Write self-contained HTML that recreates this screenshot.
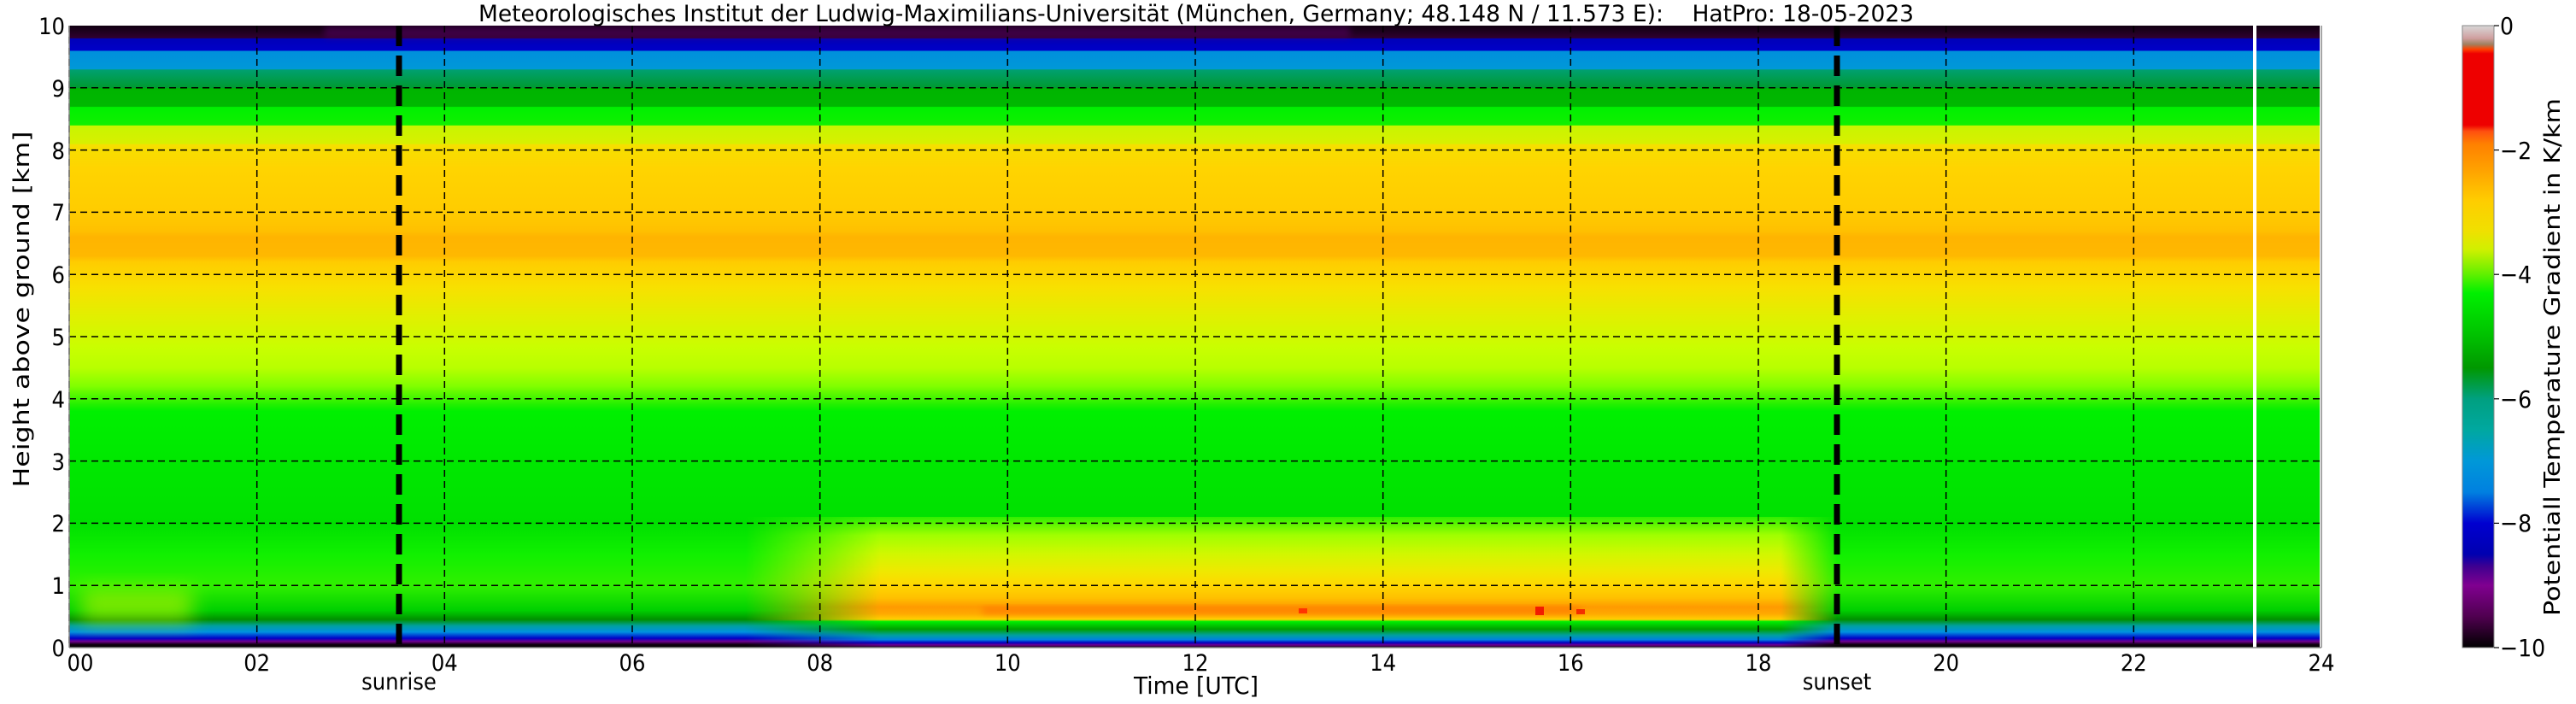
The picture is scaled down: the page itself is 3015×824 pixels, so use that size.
<!DOCTYPE html>
<html><head><meta charset="utf-8"><style>
html,body{margin:0;padding:0;background:#fff;}
svg{display:block;}
text{font-family:"DejaVu Sans Condensed","DejaVu Sans","Liberation Sans",sans-serif;font-stretch:condensed;fill:#000;}
</style></head><body>
<svg width="3015" height="824" viewBox="0 0 3015 824" xmlns="http://www.w3.org/2000/svg">
<defs>
<linearGradient id="base" gradientUnits="userSpaceOnUse" x1="0" y1="30" x2="0" y2="758">
<stop offset="0" stop-color="#100010"/><stop offset="0.02" stop-color="#300030"/>
<stop offset="0.021" stop-color="#0000b8"/><stop offset="0.04" stop-color="#0000c8"/>
<stop offset="0.041" stop-color="#0090dc"/><stop offset="0.07" stop-color="#0098d8"/>
<stop offset="0.071" stop-color="#00a070"/><stop offset="0.1" stop-color="#009a30"/>
<stop offset="0.101" stop-color="#00b400"/><stop offset="0.13" stop-color="#00b800"/>
<stop offset="0.131" stop-color="#00f000"/><stop offset="0.16" stop-color="#10f000"/>
<stop offset="0.161" stop-color="#c8f500"/><stop offset="0.19" stop-color="#d8f000"/>
<stop offset="0.191" stop-color="#f5e000"/><stop offset="0.23" stop-color="#ffd400"/>
<stop offset="0.30" stop-color="#ffcc00"/><stop offset="0.33" stop-color="#ffc000"/>
<stop offset="0.34" stop-color="#ffb400"/><stop offset="0.37" stop-color="#ffb800"/>
<stop offset="0.38" stop-color="#ffcc00"/><stop offset="0.42" stop-color="#f8e000"/>
<stop offset="0.47" stop-color="#e0f000"/><stop offset="0.52" stop-color="#c8ff00"/>
<stop offset="0.55" stop-color="#b8ff00"/><stop offset="0.58" stop-color="#80ff00"/>
<stop offset="0.61" stop-color="#20f000"/><stop offset="0.62" stop-color="#00f000"/>
<stop offset="0.70" stop-color="#00e800"/><stop offset="0.80" stop-color="#00e000"/>
<stop offset="0.85" stop-color="#10f000"/><stop offset="0.9" stop-color="#30f000"/>
<stop offset="0.94" stop-color="#00d000"/><stop offset="0.955" stop-color="#009000"/>
<stop offset="0.965" stop-color="#00a0a0"/><stop offset="0.975" stop-color="#0090e0"/>
<stop offset="0.985" stop-color="#0000c8"/><stop offset="0.99" stop-color="#700090"/>
<stop offset="0.995" stop-color="#100010"/><stop offset="1" stop-color="#000"/>
</linearGradient>
<linearGradient id="day" gradientUnits="userSpaceOnUse" x1="0" y1="605" x2="0" y2="758">
<stop offset="0" stop-color="#30f000"/><stop offset="0.14" stop-color="#a0ff00"/>
<stop offset="0.28" stop-color="#d0f800"/><stop offset="0.42" stop-color="#f0e800"/>
<stop offset="0.52" stop-color="#ffd800"/><stop offset="0.62" stop-color="#ffc000"/>
<stop offset="0.69" stop-color="#ff9a00"/><stop offset="0.74" stop-color="#ffa800"/>
<stop offset="0.785" stop-color="#ffd000"/><stop offset="0.80" stop-color="#00f000"/>
<stop offset="0.86" stop-color="#00a000"/><stop offset="0.905" stop-color="#00a0a0"/>
<stop offset="0.94" stop-color="#0080e0"/><stop offset="0.962" stop-color="#0000c0"/>
<stop offset="0.98" stop-color="#700090"/><stop offset="1" stop-color="#000"/>
</linearGradient>
<linearGradient id="fade" gradientUnits="userSpaceOnUse" x1="81" y1="0" x2="2717" y2="0">
<stop offset="0.30" stop-color="#fff" stop-opacity="0"/>
<stop offset="0.36" stop-color="#fff" stop-opacity="1"/>
<stop offset="0.76" stop-color="#fff" stop-opacity="1"/>
<stop offset="0.785" stop-color="#fff" stop-opacity="0"/>
</linearGradient>
<mask id="m"><rect x="81" y="0" width="2636" height="824" fill="url(#fade)"/></mask>
<filter id="blur" x="-0.5" y="-0.5" width="2" height="2"><feGaussianBlur stdDeviation="12"/></filter>
<filter id="blur2" x="-0.5" y="-0.5" width="2" height="2"><feGaussianBlur stdDeviation="4"/></filter>
<linearGradient id="cb" x1="0" y1="0" x2="0" y2="1">
<stop offset="0" stop-color="#d8d8d8"/><stop offset="0.02" stop-color="#d0a0a0"/>
<stop offset="0.03" stop-color="#a08060"/><stop offset="0.038" stop-color="#ff4000"/>
<stop offset="0.045" stop-color="#ee0000"/><stop offset="0.16" stop-color="#ee0000"/>
<stop offset="0.17" stop-color="#ff5010"/><stop offset="0.19" stop-color="#ff8000"/>
<stop offset="0.23" stop-color="#ffa000"/><stop offset="0.28" stop-color="#ffcc00"/>
<stop offset="0.33" stop-color="#f0e000"/><stop offset="0.36" stop-color="#d0f000"/>
<stop offset="0.4" stop-color="#60f000"/><stop offset="0.43" stop-color="#00f000"/>
<stop offset="0.5" stop-color="#00c000"/><stop offset="0.55" stop-color="#009800"/>
<stop offset="0.6" stop-color="#00a080"/><stop offset="0.65" stop-color="#00a8a0"/>
<stop offset="0.7" stop-color="#0098d8"/><stop offset="0.75" stop-color="#0080e0"/>
<stop offset="0.8" stop-color="#0000d0"/><stop offset="0.85" stop-color="#0000b0"/>
<stop offset="0.87" stop-color="#400090"/><stop offset="0.9" stop-color="#800090"/>
<stop offset="0.95" stop-color="#500050"/><stop offset="1" stop-color="#000"/>
</linearGradient>
<clipPath id="pc"><rect x="81" y="30" width="2634" height="728"/></clipPath>
</defs>

<g clip-path="url(#pc)">
<rect x="81" y="30" width="2634" height="728" fill="url(#base)"/>
<rect x="380" y="30" width="1200" height="14" fill="#600070" opacity="0.45" filter="url(#blur2)"/>
<rect x="95" y="690" width="130" height="38" fill="#c8f500" opacity="0.6" filter="url(#blur)"/>
<rect x="81" y="605" width="2634" height="153" fill="url(#day)" mask="url(#m)"/>
<rect x="1150" y="711" width="700" height="8" fill="#ff4000" opacity="0.35" filter="url(#blur2)"/>
<rect x="1520" y="712" width="10" height="6" fill="#ff1000" opacity="0.7"/>
<rect x="1797" y="710" width="10" height="10" fill="#ee0000" opacity="0.8"/>
<rect x="1845" y="713" width="10" height="6" fill="#ee0000" opacity="0.7"/>
</g>

<g stroke="#000" stroke-width="1.5" stroke-dasharray="8,5" fill="none">
<line x1="81" y1="30" x2="81" y2="758"/>
<line x1="300.7" y1="30" x2="300.7" y2="758"/><line x1="520.3" y1="30" x2="520.3" y2="758"/>
<line x1="740" y1="30" x2="740" y2="758"/><line x1="959.7" y1="30" x2="959.7" y2="758"/>
<line x1="1179.3" y1="30" x2="1179.3" y2="758"/><line x1="1399" y1="30" x2="1399" y2="758"/>
<line x1="1618.7" y1="30" x2="1618.7" y2="758"/><line x1="1838.3" y1="30" x2="1838.3" y2="758"/>
<line x1="2058" y1="30" x2="2058" y2="758"/><line x1="2277.7" y1="30" x2="2277.7" y2="758"/>
<line x1="2497.3" y1="30" x2="2497.3" y2="758"/>
<line x1="81" y1="102.8" x2="2717" y2="102.8"/><line x1="81" y1="175.6" x2="2717" y2="175.6"/>
<line x1="81" y1="248.4" x2="2717" y2="248.4"/><line x1="81" y1="321.2" x2="2717" y2="321.2"/>
<line x1="81" y1="394" x2="2717" y2="394"/><line x1="81" y1="466.8" x2="2717" y2="466.8"/>
<line x1="81" y1="539.6" x2="2717" y2="539.6"/><line x1="81" y1="612.4" x2="2717" y2="612.4"/>
<line x1="81" y1="685.2" x2="2717" y2="685.2"/>
</g>
<g stroke="#000" stroke-width="7" stroke-dasharray="24,11">
<line x1="467" y1="30" x2="467" y2="758"/><line x1="2150" y1="30" x2="2150" y2="758"/>
</g>
<line x1="2639" y1="30" x2="2639" y2="758" stroke="#fff" stroke-width="4"/>
<g stroke="#888" stroke-width="1.5" fill="none">
<line x1="81" y1="758" x2="2717" y2="758"/><line x1="2717" y1="30" x2="2717" y2="758"/>
<line x1="81" y1="30" x2="81" y2="758"/>
</g>

<text x="560" y="25" font-size="27" textLength="1680" lengthAdjust="spacingAndGlyphs" xml:space="preserve">Meteorologisches Institut der Ludwig-Maximilians-Universität (München, Germany; 48.148 N / 11.573 E):    HatPro: 18-05-2023</text>

<g font-size="27" text-anchor="end">
<text x="76" y="40">10</text><text x="76" y="113">9</text><text x="76" y="186">8</text>
<text x="76" y="258">7</text><text x="76" y="331">6</text><text x="76" y="404">5</text>
<text x="76" y="477">4</text><text x="76" y="550">3</text><text x="76" y="622">2</text>
<text x="76" y="695">1</text><text x="76" y="768">0</text>
</g>
<text transform="translate(34,362) rotate(-90)" font-size="26" text-anchor="middle" textLength="417" lengthAdjust="spacingAndGlyphs">Height above ground [km]</text>

<g font-size="27" text-anchor="middle">
<text x="94" y="785">00</text><text x="300.7" y="785">02</text><text x="520.3" y="785">04</text>
<text x="740" y="785">06</text><text x="959.7" y="785">08</text><text x="1179.3" y="785">10</text>
<text x="1399" y="785">12</text><text x="1618.7" y="785">14</text><text x="1838.3" y="785">16</text>
<text x="2058" y="785">18</text><text x="2277.7" y="785">20</text><text x="2497.3" y="785">22</text>
<text x="2717" y="785">24</text>
<text x="467" y="807">sunrise</text><text x="2150" y="807">sunset</text>
<text x="1400" y="812" font-size="28" textLength="146" lengthAdjust="spacingAndGlyphs">Time [UTC]</text>
</g>

<rect x="2882" y="30" width="37" height="728" fill="url(#cb)" stroke="#888" stroke-width="1"/>
<g stroke="#000" stroke-width="1.2">
<line x1="2919" y1="30" x2="2925" y2="30"/><line x1="2919" y1="175.6" x2="2925" y2="175.6"/>
<line x1="2919" y1="321.2" x2="2925" y2="321.2"/><line x1="2919" y1="466.8" x2="2925" y2="466.8"/>
<line x1="2919" y1="612.4" x2="2925" y2="612.4"/><line x1="2919" y1="758" x2="2925" y2="758"/>
</g>
<g font-size="28">
<text x="2926" y="40">0</text><text x="2926" y="186">−2</text><text x="2926" y="331">−4</text>
<text x="2926" y="477">−6</text><text x="2926" y="622">−8</text><text x="2926" y="768">−10</text>
</g>
<text transform="translate(2996,418) rotate(-90)" font-size="26" text-anchor="middle" textLength="606" lengthAdjust="spacingAndGlyphs">Potentiall Temperature Gradient in K/km</text>
</svg>
</body></html>
